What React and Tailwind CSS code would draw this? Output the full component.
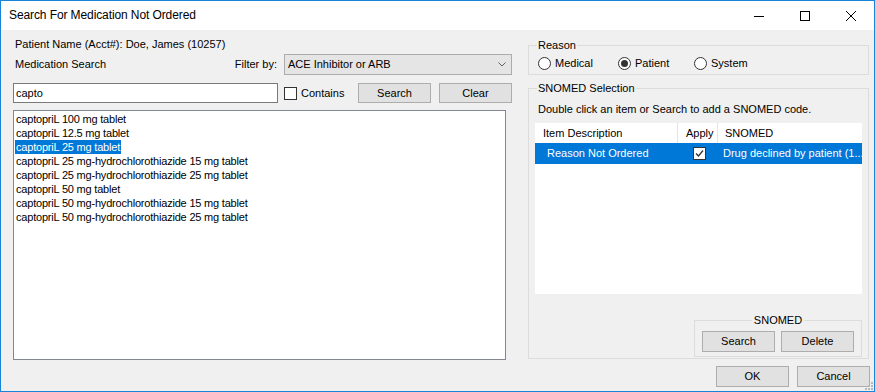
import React from 'react';

const font = { fontFamily: '"Liberation Sans", Arial, sans-serif' };

const meds = [
  'captopriL 100 mg tablet',
  'captopriL 12.5 mg tablet',
  'captopriL 25 mg tablet',
  'captopriL 25 mg-hydrochlorothiazide 15 mg tablet',
  'captopriL 25 mg-hydrochlorothiazide 25 mg tablet',
  'captopriL 50 mg tablet',
  'captopriL 50 mg-hydrochlorothiazide 15 mg tablet',
  'captopriL 50 mg-hydrochlorothiazide 25 mg tablet',
];

function WinButton({ children, className = '' }) {
  return (
    <div className={`flex items-center justify-center border border-[#adadad] bg-[#e1e1e1] text-[11px] text-black ${className}`}>
      {children}
    </div>
  );
}

function Radio({ label, checked }) {
  return (
    <div className="flex items-center gap-[4px]">
      <div className="flex h-[13px] w-[13px] items-center justify-center rounded-full border border-[#333333] bg-white">
        {checked && <div className="h-[7px] w-[7px] rounded-full bg-[#333333]" />}
      </div>
      <span>{label}</span>
    </div>
  );
}

function CheckMark() {
  return (
    <svg width="9" height="9" viewBox="0 0 9 9">
      <path d="M1 4.5 L3.5 7 L8 1.5" fill="none" stroke="#333" strokeWidth="1.3" />
    </svg>
  );
}

export default function App() {
  return (
    <div className="relative flex h-[392px] w-[875px] flex-col border border-[#1883d7] bg-[#f0f0f0] text-[11px] leading-[13px] text-black" style={font}>
      {/* Title bar */}
      <div className="flex h-[29px] shrink-0 items-center bg-white">
        <span className="pl-[8px] text-[12px] tracking-[-0.1px]">Search For Medication Not Ordered</span>
        <div className="ml-auto flex h-full items-center">
          <div className="flex h-full w-[46px] items-center justify-center">
            <svg width="10" height="10" viewBox="0 0 10 10"><path d="M0 5.5 H10" stroke="#000" strokeWidth="1" /></svg>
          </div>
          <div className="flex h-full w-[46px] items-center justify-center">
            <svg width="10" height="10" viewBox="0 0 10 10"><rect x="0.5" y="0.5" width="9" height="9" fill="none" stroke="#000" strokeWidth="1" /></svg>
          </div>
          <div className="flex h-full w-[46px] items-center justify-center">
            <svg width="10" height="10" viewBox="0 0 10 10"><path d="M0 0 L10 10 M10 0 L0 10" stroke="#000" strokeWidth="1" /></svg>
          </div>
        </div>
      </div>

      {/* Body */}
      <div className="flex gap-[16px] pl-[12px] pr-[5px] pt-[8px]">
        {/* Left column */}
        <div className="flex w-[499px] flex-col">
          <div className="h-[13px] pl-[2px]">Patient Name (Acct#): Doe, James (10257)</div>
          <div className="mt-[3px] flex h-[21px] items-center">
            <span className="pl-[2px]">Medication Search</span>
            <span className="ml-auto mr-[7px]">Filter by:</span>
            <div className="flex h-[21px] w-[228px] items-center border border-[#acacac] bg-[#e5e5e5] pl-[3px] pr-[5px]">
              <span>ACE Inhibitor or ARB</span>
              <svg className="ml-auto" width="8" height="5" viewBox="0 0 8 5">
                <path d="M0.5 0.5 L4 4 L7.5 0.5" fill="none" stroke="#606060" strokeWidth="1" />
              </svg>
            </div>
          </div>
          <div className="mt-[8px] flex h-[20px] items-center">
            <div className="flex h-[20px] w-[265px] items-center border border-[#7a7a7a] bg-white pl-[2px]">capto</div>
            <div className="ml-[6px] h-[13px] w-[13px] border border-[#333333] bg-white" />
            <span className="ml-[4px]">Contains</span>
            <WinButton className="ml-auto h-[20px] w-[73px]">Search</WinButton>
            <WinButton className="ml-[8px] h-[20px] w-[73px]">Clear</WinButton>
          </div>
          <div className="mt-[7px] flex h-[250px] w-[493px] flex-col border border-[#828790] bg-white pl-[1px] pt-[1px] tracking-[-0.2px]">
            {meds.map((m, i) => (
              <div key={m} className="h-[14px] leading-[14px]">
                <span className={`inline-block px-[1px] ${i === 2 ? 'bg-[#0078d7] text-white' : ''}`}>{m}</span>
              </div>
            ))}
          </div>
        </div>

        {/* Right column */}
        <div className="flex w-[341px] flex-col">
          <fieldset className="mt-[1px] h-[36px] border border-[#dcdcdc] pl-[8px] pr-[6px]">
            <legend className="px-[1px] leading-[13px]">Reason</legend>
            <div className="ml-[1px] mt-[4px] flex h-[14px] items-center">
              <div className="w-[80px]"><Radio label="Medical" /></div>
              <div className="w-[76px]"><Radio label="Patient" checked /></div>
              <Radio label="System" />
            </div>
          </fieldset>

          <fieldset className="mt-[7px] flex h-[277px] flex-col border border-[#dcdcdc] pl-[6px] pr-[6px]">
            <legend className="ml-[2px] px-[1px] leading-[13px]">SNOMED Selection</legend>
            <div className="ml-[3px] mt-[8px] h-[13px]">Double click an item or Search to add a SNOMED code.</div>
            <div className="mt-[7px] flex h-[171px] w-[327px] flex-col bg-white">
              <div className="flex h-[20px] items-center">
                <div className="flex h-full w-[143px] items-center border-r border-[#e5e5e5] pl-[8px]">Item Description</div>
                <div className="flex h-full w-[40px] items-center border-r border-[#e5e5e5] pl-[8px]">Apply</div>
                <div className="flex h-full flex-1 items-center pl-[7px]">SNOMED</div>
              </div>
              <div className="flex h-[21px] items-center bg-[#0078d7] text-white">
                <div className="w-[144px] pl-[12px]">Reason Not Ordered</div>
                <div className="flex w-[40px] items-center pl-[14px]">
                  <div className="flex h-[13px] w-[13px] items-center justify-center border border-[#333333] bg-white">
                    <CheckMark />
                  </div>
                </div>
                <div className="min-w-0 flex-1 whitespace-nowrap pl-[4px]">Drug declined by patient (1...</div>
              </div>
            </div>
            <fieldset className="ml-auto mt-[20px] h-[43px] w-[168px] border border-[#dcdcdc] px-[7px]">
              <legend className="mx-auto px-[2px] leading-[13px]">SNOMED</legend>
              <div className="mt-[4px] flex gap-[6px]">
                <WinButton className="h-[21px] w-[73px]">Search</WinButton>
                <WinButton className="h-[21px] w-[73px]">Delete</WinButton>
              </div>
            </fieldset>
          </fieldset>
        </div>
      </div>

      {/* Bottom buttons */}
      <div className="mt-[6px] flex justify-end gap-[8px] pr-[4px]">
        <WinButton className="h-[21px] w-[73px]">OK</WinButton>
        <WinButton className="h-[21px] w-[73px]">Cancel</WinButton>
      </div>

      {/* Size grip */}
      <svg className="absolute bottom-[1px] right-[1px]" width="8" height="8" viewBox="0 0 8 8">
        {[[6, 0], [6, 3], [3, 3], [6, 6], [3, 6], [0, 6]].map(([x, y]) => (
          <rect key={`${x}-${y}`} x={x} y={y} width="2" height="2" fill="#b8b8b8" />
        ))}
      </svg>
    </div>
  );
}
